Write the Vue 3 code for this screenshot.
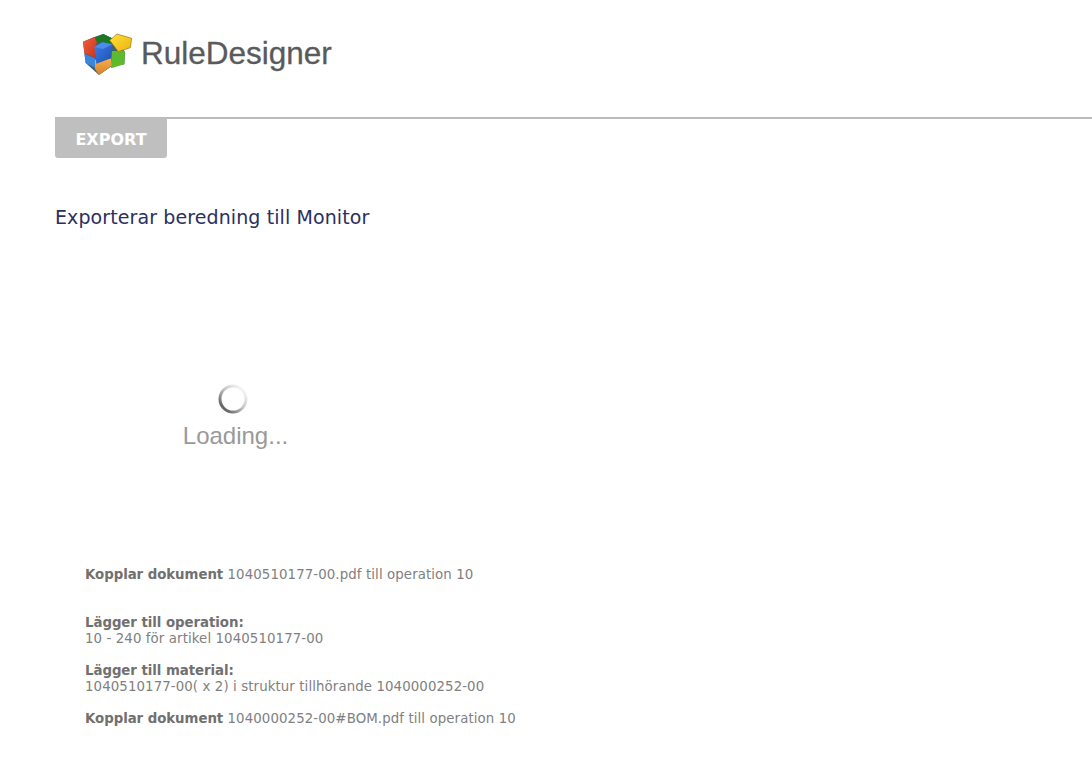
<template>
  <div class="page">
    <header class="brand">
      <svg class="logo" width="54" height="44" viewBox="18 21 162 132">
        <defs>
          <linearGradient id="red" x1="0" y1="0" x2="1" y2="1">
            <stop offset="0" stop-color="#f0603c" />
            <stop offset="1" stop-color="#c8321e" />
          </linearGradient>
          <linearGradient id="blue" x1="0" y1="0" x2="1" y2="1">
            <stop offset="0" stop-color="#3f7fe6" />
            <stop offset="1" stop-color="#1c4fb4" />
          </linearGradient>
          <linearGradient id="orange" x1="0" y1="0" x2="0" y2="1">
            <stop offset="0" stop-color="#f6b04a" />
            <stop offset="1" stop-color="#d9802a" />
          </linearGradient>
          <linearGradient id="yellow" x1="0" y1="0" x2="1" y2="1">
            <stop offset="0" stop-color="#ffdf3a" />
            <stop offset="1" stop-color="#eeb30e" />
          </linearGradient>
        </defs>
        <polygon points="24,50 58,36 85,27 116,42 150,80 148,118 110,124 72,150 32,114" fill="#3e5f6e" />
        <polygon points="58,38 85,27 116,42 108,56 66,52" fill="#1a7a24" />
        <polygon points="110,78 150,78 148,118 108,130" fill="#5dba2c" />
        <polygon points="24,50 58,36 66,52 60,66 60,98 28,84" fill="url(#red)" />
        <polygon points="28,86 60,100 62,130 32,114" fill="#3a86de" />
        <polygon points="60,104 108,100 110,122 72,150 60,132" fill="url(#orange)" />
        <polygon points="58,66 82,52 112,58 108,100 64,116" fill="url(#blue)" />
        <polygon points="58,66 82,52 112,58 84,72" fill="#4d8cec" />
        <polygon points="104,46 126,27 170,40 166,68 130,80" fill="url(#yellow)" stroke="#8a7414" stroke-width="2" />
      </svg>
      <span class="brand-name">RuleDesigner</span>
    </header>

    <nav class="tabs">
      <div class="tab">EXPORT</div>
    </nav>

    <h1 class="title">Exporterar beredning till Monitor</h1>

    <div class="loader">
      <svg class="spinner" width="32" height="32" viewBox="0 0 32 32">
        <defs>
          <linearGradient id="spin" x1="0.9" y1="0" x2="0.1" y2="0.8">
            <stop offset="0.1" stop-color="#f6f6f6" />
            <stop offset="0.55" stop-color="#c4c4c4" />
            <stop offset="1" stop-color="#666" />
          </linearGradient>
        </defs>
        <circle cx="16" cy="16" r="13" fill="none" stroke="url(#spin)" stroke-width="3" />
      </svg>
      <div class="loading-text">Loading...</div>
    </div>

    <div class="log">
      <p v-for="(row, i) in rows" :key="i" :class="row.cls">
        <b>{{ row.head }}</b>{{ row.inline ? " " + row.inline : "" }}<template v-if="row.below"><br />{{ row.below }}</template>
      </p>
    </div>
  </div>
</template>

<script setup>
const rows = [
  { head: "Kopplar dokument", inline: "1040510177-00.pdf till operation 10", cls: "gap-big" },
  { head: "Lägger till operation:", below: "10 - 240 för artikel 1040510177-00" },
  { head: "Lägger till material:", below: "1040510177-00( x 2) i struktur tillhörande 1040000252-00" },
  { head: "Kopplar dokument", inline: "1040000252-00#BOM.pdf till operation 10" },
];
</script>

<style scoped>
.page {
  height: 759px;
  overflow: hidden;
  background: #fff;
  font-family: "DejaVu Sans", Verdana, sans-serif;
}

.brand {
  height: 117px;
  display: flex;
  align-items: flex-start;
  padding: 32px 0 0 81px;
  box-sizing: border-box;
}

.logo {
  display: block;
}

.brand-name {
  margin: 3px 0 0 6px;
  font-family: "Liberation Sans", Arial, sans-serif;
  font-size: 31.5px;
  line-height: 36px;
  color: #5a5a5a;
  -webkit-text-stroke: 0.3px #5a5a5a;
}

.tabs {
  margin-left: 55px;
  border-top: 2px solid #bbb;
}

.tab {
  width: 112px;
  height: 40px;
  margin-top: -1px;
  padding-top: 2px;
  box-sizing: border-box;
  background: #bfbfbf;
  border-radius: 0 0 3px 3px;
  color: #fff;
  font-size: 16px;
  font-weight: bold;
  line-height: 39px;
  text-align: center;
}

.title {
  margin: 48px 0 0 55px;
  font-size: 19px;
  font-weight: normal;
  line-height: 22px;
  letter-spacing: 0.1px;
  color: #2b2f61;
}

.loader {
  width: 100px;
  margin: 155px 0 0 183px;
  display: flex;
  flex-direction: column;
  align-items: center;
}

.spinner {
  display: block;
}

.loading-text {
  margin: 7px 0 0 5px;
  font-family: "Liberation Sans", Arial, sans-serif;
  font-size: 24px;
  line-height: 28px;
  color: #999;
  white-space: nowrap;
}

.log {
  margin: 117px 0 0 85px;
  font-size: 13.33px;
  line-height: 16px;
  letter-spacing: 0.1px;
  color: #808080;
}

.log p {
  margin: 0 0 16px;
}

.log p.gap-big {
  margin-bottom: 32px;
}

.log b {
  color: #707070;
  letter-spacing: -0.05px;
}
</style>
